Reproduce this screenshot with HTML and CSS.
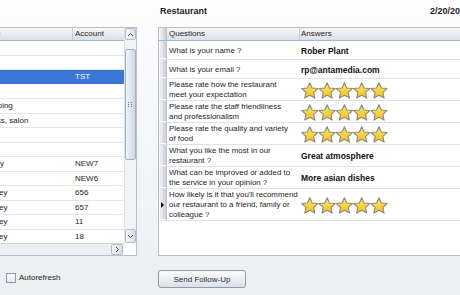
FILE: index.html
```html
<!DOCTYPE html>
<html lang="en">
<head>
  <meta charset="UTF-8" />
  <title>Survey results</title>
  <link rel="stylesheet" href="styles.css">
</head>
<body>
  <div class="app">
    <section class="left">
      <div class="list-box">
        <div class="list">
          <div class="list-head"><span>ID</span><span>Name</span><span>Account</span></div>
          <div class="list-row"><span>14</span><span>Hotel</span><span></span></div>
          <div class="list-row"><span>13</span><span>Pub</span><span></span></div>
          <div class="list-row selected"><span>12</span><span>Test</span><span>TST</span></div>
          <div class="list-row"><span>11</span><span>Bar</span><span></span></div>
          <div class="list-row"><span>10</span><span>Shopping</span><span></span></div>
          <div class="list-row"><span>9</span><span>Fitness, salon</span><span></span></div>
          <div class="list-row"><span>8</span><span>Clinic</span><span></span></div>
          <div class="list-row"><span>7</span><span>Spa</span><span></span></div>
          <div class="list-row"><span>6</span><span>Survey</span><span>NEW7</span></div>
          <div class="list-row"><span>5</span><span>Diner</span><span>NEW6</span></div>
          <div class="list-row"><span>4</span><span>Journey</span><span>656</span></div>
          <div class="list-row"><span>3</span><span>Journey</span><span>657</span></div>
          <div class="list-row"><span>2</span><span>Journey</span><span>11</span></div>
          <div class="list-row"><span>1</span><span>Journey</span><span>18</span></div>
        </div>
        <div class="vscroll">
          <div class="sbtn"><svg width="7" height="5" viewBox="0 0 7 5"><path d="M1 4 L3.5 1.5 L6 4" /></svg></div>
          <div class="thumb"><svg width="5" height="5" viewBox="0 0 5 5"><path d="M0 0h1v1H0zM3 0h1v1H3zM0 2h1v1H0zM3 2h1v1H3zM0 4h1v1H0zM3 4h1v1H3z" /></svg></div>
          <div class="sbtn down"><svg width="7" height="5" viewBox="0 0 7 5"><path d="M1 1 L3.5 3.5 L6 1" /></svg></div>
        </div>
        <div class="hscroll">
          <div class="sbtn side"><svg width="5" height="7" viewBox="0 0 5 7"><path d="M1 1 L3.5 3.5 L1 6" /></svg></div>
        </div>
        <div class="corner"></div>
      </div>
      <label class="check"><span class="box"></span>Autorefresh</label>
    </section>

    <section class="right">
      <div class="title-row">
        <h1>Restaurant</h1>
        <span class="date">2/20/2014</span>
      </div>
      <div class="survey">
        <div class="survey-head"><span class="ind"></span><span class="q">Questions</span><span class="a">Answers</span></div>
        <div class="survey-row"><span class="ind"></span><span class="q">What is your name ?</span><span class="a">Rober Plant</span></div>
        <div class="survey-row"><span class="ind"></span><span class="q">What is your email ?</span><span class="a">rp@antamedia.com</span></div>
        <div class="survey-row"><span class="ind"></span><span class="q">Please rate how the restaurant<br>meet your expectation</span>
          <span class="a"><svg class="stars" viewBox="0 0 88 17"><use href="#star" x="0"/><use href="#star" x="17.3"/><use href="#star" x="34.6"/><use href="#star" x="51.9"/><use href="#star" x="69.2"/></svg></span></div>
        <div class="survey-row"><span class="ind"></span><span class="q">Please rate the staff friendliness<br>and professionalism</span>
          <span class="a"><svg class="stars" viewBox="0 0 88 17"><use href="#star" x="0"/><use href="#star" x="17.3"/><use href="#star" x="34.6"/><use href="#star" x="51.9"/><use href="#star" x="69.2"/></svg></span></div>
        <div class="survey-row"><span class="ind"></span><span class="q">Please rate the quality and variety<br>of food</span>
          <span class="a"><svg class="stars" viewBox="0 0 88 17"><use href="#star" x="0"/><use href="#star" x="17.3"/><use href="#star" x="34.6"/><use href="#star" x="51.9"/><use href="#star" x="69.2"/></svg></span></div>
        <div class="survey-row"><span class="ind"></span><span class="q">What you like the most in our<br>restaurant ?</span><span class="a">Great atmosphere</span></div>
        <div class="survey-row"><span class="ind"></span><span class="q">What can be improved or added to<br>the service in your opinion ?</span><span class="a">More asian dishes</span></div>
        <div class="survey-row"><span class="ind current"></span><span class="q">How likely is it that you'll recommend<br>our restaurant to a friend, family or<br>colleague ?</span>
          <span class="a"><svg class="stars" viewBox="0 0 88 17"><use href="#star" x="0"/><use href="#star" x="17.3"/><use href="#star" x="34.6"/><use href="#star" x="51.9"/><use href="#star" x="69.2"/></svg></span></div>
      </div>
      <button class="send">Send Follow-Up</button>
    </section>
  </div>

  <svg class="defs" width="0" height="0">
    <defs>
      <linearGradient id="starFill" x1="0" y1="0" x2="0" y2="1">
        <stop offset="0" stop-color="#fce66e" />
        <stop offset="1" stop-color="#f2c21b" />
      </linearGradient>
      <polygon id="star" points="8.8,0.8 11.15,5.96 16.9,6.54 12.6,10.44 13.86,16.1 8.8,13.2 3.74,16.1 5,10.44 0.7,6.54 6.45,5.96"
        fill="url(#starFill)" stroke="#8c897b" stroke-width="1.1" stroke-linejoin="round" />
    </defs>
  </svg>
</body>
</html>
```

FILE: styles.css
```css
body {
  margin: 0;
  height: 295px;
  overflow: hidden;
  font-family: "Liberation Sans", Arial, sans-serif;
  font-size: 8px;
  color: #1e1e1e;
  background: linear-gradient(#fdfdfe, #eceef2);
}

.app {
  display: flex;
  gap: 21px;
}

/* left list */
.left {
  width: 137px;
  flex: none;
  padding-top: 27px;
}

.list-box {
  width: 248px;
  height: 229px;
  margin-left: -111px;
  box-sizing: border-box;
  border: 1px solid #b7c1cd;
  background: #fff;
  display: grid;
  grid-template-columns: 1fr 12px;
  grid-template-rows: 1fr 12px;
}

.list {
  overflow: hidden;
}

.list-head, .list-row {
  display: grid;
  grid-template-columns: 86px 97px 1fr;
  white-space: nowrap;
}

.list-head {
  height: 13px;
  line-height: 12px;
  box-sizing: border-box;
  border-bottom: 1px solid #aab5c2;
  background: linear-gradient(#f6f7f9, #dbe0e7);
}

.list-head span {
  border-right: 1px solid #c3cbd5;
  padding-left: 3px;
}

.list-head span:last-child {
  border-right: none;
  padding-left: 2px;
}

.list-row {
  height: 14.5px;
  line-height: 13.5px;
  box-sizing: border-box;
  border-bottom: 1px solid #e2e7ed;
}

.list-row span {
  padding-left: 3px;
  overflow: hidden;
}

.list-row span:last-child {
  padding-left: 2px;
}

.list-row.selected {
  background: #3b78d6;
  color: #fff;
  border-bottom-color: #fff;
}

.vscroll {
  display: flex;
  flex-direction: column;
  background: #f1f3f6;
  border-left: 1px solid #dde2e9;
}

.sbtn {
  height: 12px;
  flex: none;
  box-sizing: border-box;
  display: flex;
  align-items: center;
  justify-content: center;
  border: 1px solid #b3bdc9;
  border-radius: 2px;
  background: linear-gradient(to right, #f5f7f9, #d7dde5);
}

.sbtn.down {
  height: 14px;
  margin-top: auto;
}

.sbtn.side {
  width: 12px;
  height: 11px;
}

.sbtn svg path {
  fill: none;
  stroke: #3e4753;
  stroke-width: 1;
}

.thumb {
  margin-top: 9px;
  height: 111px;
  box-sizing: border-box;
  border: 1px solid #a5b0bd;
  border-radius: 2px;
  background: linear-gradient(to right, #f0f3f6, #d0d7df);
  display: flex;
  align-items: center;
  justify-content: center;
}

.thumb svg path {
  fill: #6d7885;
}

.hscroll {
  display: flex;
  justify-content: flex-end;
  align-items: center;
  padding-right: 1px;
  background: #eceff3;
  border-top: 1px solid #d0d7df;
}

.corner {
  background: #fff;
}

.check {
  display: flex;
  align-items: center;
  gap: 3px;
  margin: 17px 0 0 6px;
  line-height: 10px;
}

.box {
  width: 10px;
  height: 10px;
  box-sizing: border-box;
  border: 1px solid #8e9aa8;
  background: linear-gradient(#fbfcfd, #e4e8ed);
}

/* right survey */
.right {
  width: 320px;
  flex: none;
}

.title-row {
  height: 27px;
  box-sizing: border-box;
  padding-top: 5px;
  display: flex;
  line-height: 12px;
  font-size: 9px;
  font-weight: bold;
  white-space: nowrap;
}

.title-row h1 {
  margin: 0;
  width: 272px;
  padding-left: 2px;
  box-sizing: border-box;
  font-size: 9px;
}

.survey {
  height: 229px;
  box-sizing: border-box;
  border: 1px solid #b7c1cd;
  background: #fff;
}

.survey-head, .survey-row {
  display: grid;
  grid-template-columns: 8px 133px 1fr;
}

.survey-head {
  height: 13px;
  line-height: 12px;
  box-sizing: border-box;
  border-bottom: 1px solid #aab5c2;
  background: linear-gradient(#f6f7f9, #dbe0e7);
}

.survey-head .q {
  padding-left: 2px;
  border-right: 1px solid #c3cbd5;
}

.survey-head .a {
  padding-left: 1px;
}

.survey-row {
  min-height: 19px;
  box-sizing: border-box;
  border-bottom: 1px solid #dde3ea;
  line-height: 10px;
}

.survey-row .q, .survey-row .a {
  display: flex;
  align-items: center;
  padding: 1px 1px 0 2px;
}

.survey-row .q {
  font-size: 7.9px;
  white-space: nowrap;
}

.survey-row .a {
  padding-left: 1px;
  font-size: 8.5px;
  font-weight: bold;
  color: #111;
}

.ind {
  background: linear-gradient(to right, #f6f7f9, #c7ced7);
  border-right: 1px solid #b9c2cd;
  box-shadow: inset 0 -1px 0 #fff;
}

.survey-head .ind {
  box-shadow: none;
}

.ind.current {
  display: flex;
  align-items: center;
  justify-content: center;
}

.ind.current::before {
  content: "";
  border-left: 3px solid #111;
  border-top: 3px solid transparent;
  border-bottom: 3px solid transparent;
}

.stars {
  width: 88px;
  height: 17px;
  display: block;
}

.send {
  margin-top: 14px;
  width: 88px;
  height: 18px;
  padding: 0;
  border: 1px solid #8f9cac;
  border-radius: 3px;
  background: linear-gradient(#fafbfc, #dce1e8);
  font-family: inherit;
  font-size: 8px;
  color: #1f2c3a;
}

.defs {
  display: block;
  width: 0;
  height: 0;
}
```
